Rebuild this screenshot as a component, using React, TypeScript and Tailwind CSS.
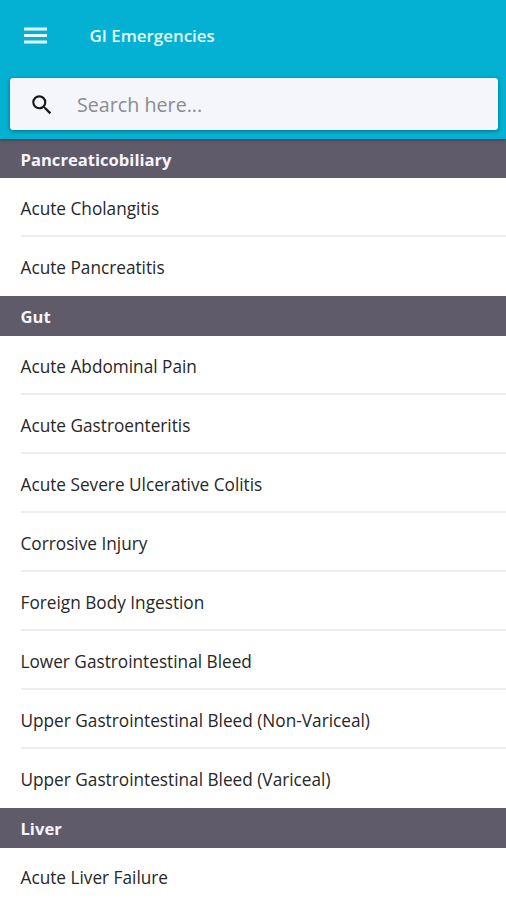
import { MdSearch } from 'react-icons/md';

const sections = [
  { title: 'Pancreaticobiliary', items: ['Acute Cholangitis', 'Acute Pancreatitis'] },
  {
    title: 'Gut',
    items: [
      'Acute Abdominal Pain',
      'Acute Gastroenteritis',
      'Acute Severe Ulcerative Colitis',
      'Corrosive Injury',
      'Foreign Body Ingestion',
      'Lower Gastrointestinal Bleed',
      'Upper Gastrointestinal Bleed (Non-Variceal)',
      'Upper Gastrointestinal Bleed (Variceal)',
    ],
  },
  { title: 'Liver', items: ['Acute Liver Failure'] },
];

function MenuIcon() {
  return (
    <svg width="23" height="17" viewBox="0 0 23 17" fill="currentColor" aria-hidden="true">
      <path d="M0 .5h23v3H0zM0 7h23v3H0zM0 13.5h23v3H0z" />
    </svg>
  );
}

export default function App() {
  return (
    <div className="h-[900px] w-full overflow-hidden bg-white font-['Open_Sans',sans-serif]">
      <header className="relative h-[139px] bg-[#04b1d2] pr-2 pl-[9.5px] shadow-[0_1px_3px_rgba(0,0,0,0.35)]">
        <div className="flex h-[78px] items-center pb-[7px] pl-[14.5px] text-[#e4fbff]">
          <MenuIcon />
          <h1 className="ml-[42.5px] pt-px text-[16.9px] font-semibold">GI Emergencies</h1>
        </div>
        <div className="flex h-[52px] items-center rounded-[3px] bg-[#f4f6fb] pl-[19px] shadow-[0_1px_4px_rgba(0,0,0,0.4)]">
          <MdSearch size={26} className="mt-px text-[#161616]" />
          <span className="ml-[22.5px] pt-px text-[19.7px] text-[#8b8c90]">Search here...</span>
        </div>
      </header>

      {sections.map((section) => (
        <section key={section.title}>
          <h2 className="flex h-[39.4px] items-center bg-[#5f5b6b] pt-[2.8px] pl-[20.5px] text-[16.6px] font-bold text-[#f7f5fc]">
            {section.title}
          </h2>
          <ul className="pl-[20.5px]">
            {section.items.map((item) => (
              <li
                key={item}
                className="flex h-[59.05px] items-center border-b-2 border-[#eeeeee] pt-[4.2px] text-[17.23px] text-[#272727] last:border-transparent"
              >
                {item}
              </li>
            ))}
          </ul>
        </section>
      ))}
    </div>
  );
}
